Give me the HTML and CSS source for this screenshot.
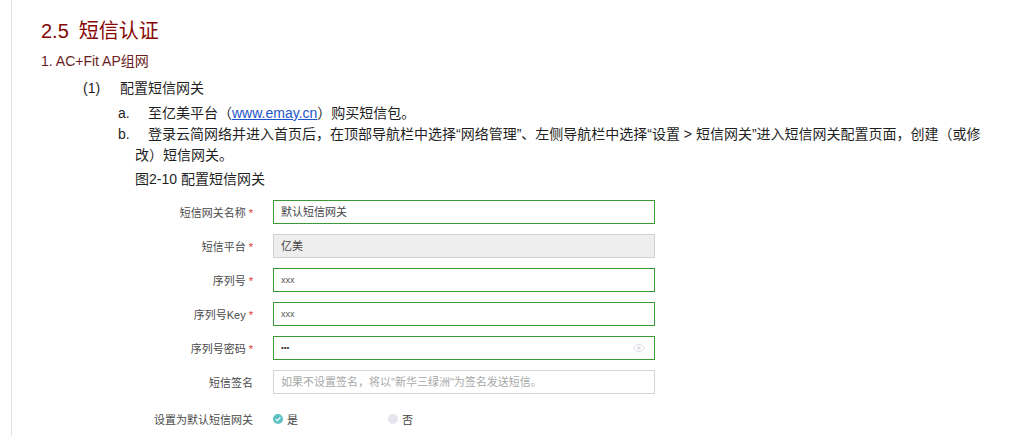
FILE: index.html
```html
<!DOCTYPE html>
<html lang="zh-CN">

<head>
  <meta name="viewport" content="width=device-width, initial-scale=1">
  <meta charset="UTF-8">
  <link rel="stylesheet" href="styles.css">
</head>

<body>
  <div class="doc">
    <h2 class="sec-title"><span class="sec-num">2.5</span>短信认证</h2>
    <div class="sub-title">1. AC+Fit AP组网</div>

    <div class="step"><span class="step-num">(1)</span>配置短信网关</div>

    <div class="item"><span class="item-mark">a.</span>至亿美平台（<a class="link" href="#">www.emay.cn</a>）购买短信包。</div>
    <div class="item"><span class="item-mark">b.</span>登录云简网络并进入首页后，在顶部导航栏中选择“网络管理”、左侧导航栏中选择“设置 &gt; 短信网关”进入短信网关配置页面，创建（或修改）短信网关。</div>

    <div class="caption">图2-10 配置短信网关</div>

    <div class="form">
      <div class="form-row">
        <label class="form-label">短信网关名称<i class="req">*</i></label>
        <div class="input active">默认短信网关</div>
      </div>
      <div class="form-row">
        <label class="form-label">短信平台<i class="req">*</i></label>
        <div class="input disabled">亿美</div>
      </div>
      <div class="form-row">
        <label class="form-label">序列号<i class="req">*</i></label>
        <div class="input active small">xxx</div>
      </div>
      <div class="form-row">
        <label class="form-label">序列号Key<i class="req">*</i></label>
        <div class="input active small">xxx</div>
      </div>
      <div class="form-row">
        <label class="form-label">序列号密码<i class="req">*</i></label>
        <div class="input active pwd">
          <span class="dots">•••</span>
          <svg class="eye" width="12" height="8" viewBox="0 0 12 8">
            <path d="M0.5 4C2 1.5 4 0.5 6 0.5S10 1.5 11.5 4C10 6.5 8 7.5 6 7.5S2 6.5 0.5 4Z" fill="none" stroke="#dcdce4" stroke-width="1"/>
            <circle cx="6" cy="4" r="1.8" fill="#dcdce4"/>
          </svg>
        </div>
      </div>
      <div class="form-row">
        <label class="form-label">短信签名</label>
        <div class="input placeholder">如果不设置签名，将以"新华三绿洲"为签名发送短信。</div>
      </div>
      <div class="form-row radio-row">
        <label class="form-label">设置为默认短信网关</label>
        <div class="radios">
          <span class="radio checked">
            <svg width="10" height="10" viewBox="0 0 10 10">
              <circle cx="5" cy="5" r="5" fill="#5cc2c4"/>
              <path d="M2.6 5.1L4.3 6.7L7.4 3.4" fill="none" stroke="#fff" stroke-width="1.2"/>
            </svg>是
          </span>
          <span class="radio">
            <svg width="10" height="10" viewBox="0 0 10 10">
              <circle cx="5" cy="5" r="5" fill="#e4e4ee"/>
            </svg>否
          </span>
        </div>
      </div>
    </div>
  </div>
</body>

</html>
```

FILE: styles.css
```css
body {
  margin: 0;
  padding: 0;
  background-color: #ffffff;
  font-family: "Liberation Sans", "Noto Sans CJK SC", sans-serif;
  color: #1f1f1f;
}

.doc {
  margin-left: 11px;
  border-left: 1px solid #e2e2e2;
  min-height: 436px;
  padding-left: 29px;
  width: 950px;
}

.sec-title {
  margin: 0;
  padding-top: 19px;
  font-size: 20px;
  line-height: 24px;
  font-weight: normal;
  color: #860606;
}

.sec-num {
  margin-right: 10px;
}

.sub-title {
  margin-top: 8px;
  font-size: 14px;
  line-height: 20px;
  color: #6a1e1e;
}

.step {
  margin-top: 7px;
  margin-left: 42px;
  font-size: 14px;
  line-height: 21px;
}

.step-num {
  display: inline-block;
  width: 37px;
}

.item {
  margin-left: 94px;
  text-indent: -17px;
  font-size: 14px;
  line-height: 21px;
}

.step + .item {
  margin-top: 4px;
}

.item-mark {
  display: inline-block;
  width: 30px;
  text-indent: 0;
}

.link {
  color: #1d56c9;
  text-decoration: underline;
}

.caption {
  margin-top: 3px;
  margin-left: 94px;
  font-size: 14px;
  line-height: 21px;
}

.form {
  margin-top: 10px;
  display: flex;
  flex-direction: column;
  gap: 10px;
}

.form-row {
  display: flex;
  align-items: center;
}

.form-label {
  width: 212px;
  margin-right: 20px;
  text-align: right;
  font-size: 11px;
  color: #4a4a4a;
}

.req {
  font-style: normal;
  color: #e0302c;
  margin-left: 3px;
}

.input {
  box-sizing: border-box;
  width: 382px;
  height: 24px;
  padding: 0 7px;
  border: 1px solid #cfcfcf;
  font-size: 11px;
  line-height: 22px;
  color: #444;
}

.input.active {
  border-color: #3a9b36;
}

.input.small {
  font-size: 9px;
  color: #555;
}

.input.disabled {
  background-color: #eeeeee;
  border-color: #cfcfcf;
}

.input.placeholder {
  color: #a8a8a8;
  border-color: #d4d4d4;
}

.input.pwd {
  display: flex;
  align-items: center;
  justify-content: space-between;
  padding-right: 9px;
}

.dots {
  font-size: 8px;
  color: #333;
}

.radio-row {
  margin-top: 7px;
}

.radios {
  display: flex;
  font-size: 11px;
  color: #444;
}

.radio {
  display: flex;
  align-items: center;
  gap: 4px;
  width: 115px;
}
```
